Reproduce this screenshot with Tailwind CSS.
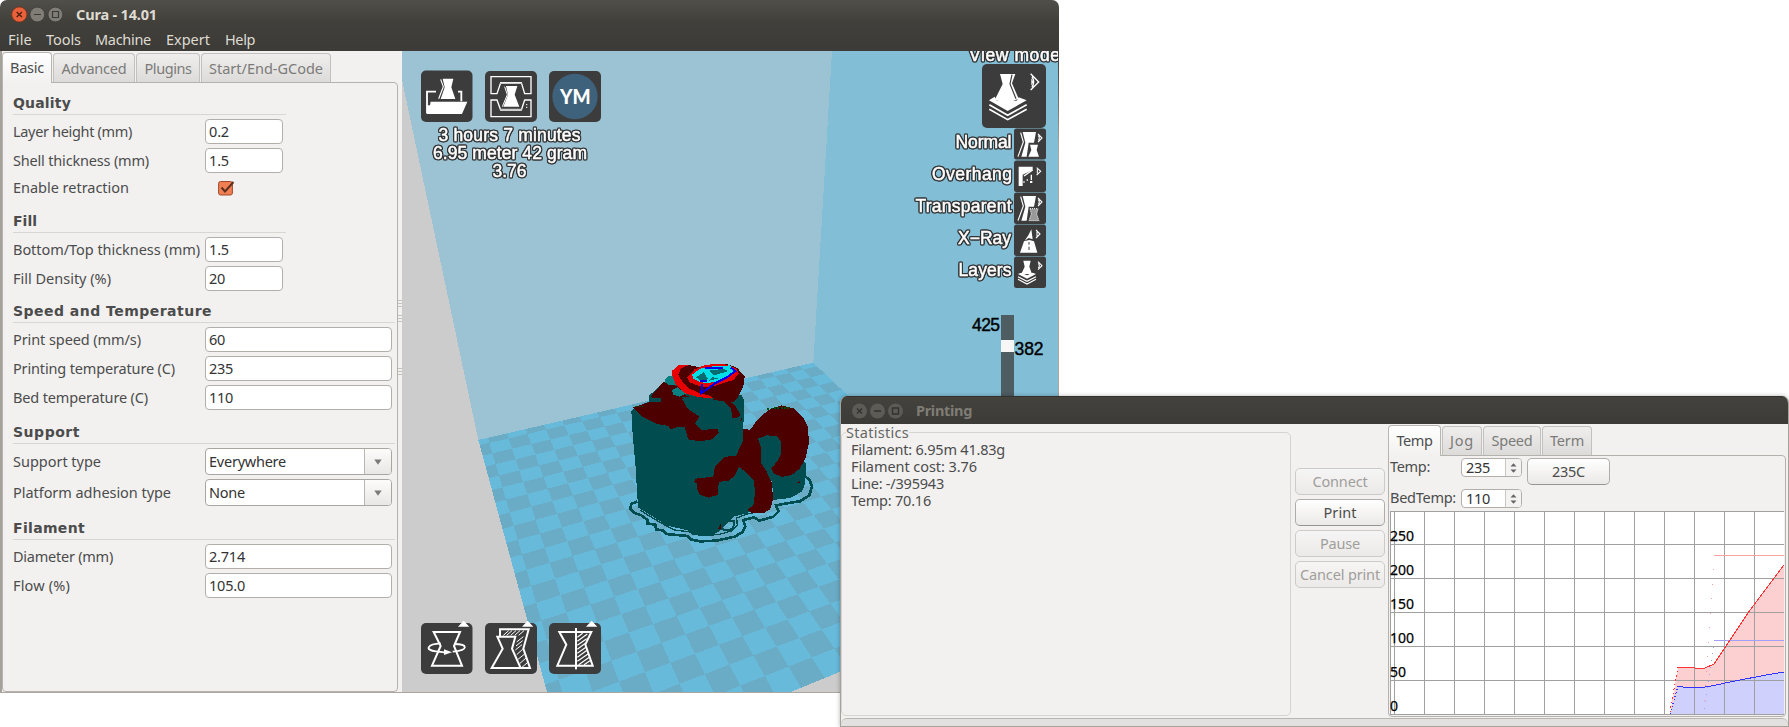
<!DOCTYPE html>
<html lang="en">
<head>
<meta charset="utf-8">
<title>Cura - 14.01</title>
<script src="https://cdn.jsdelivr.net/npm/@tailwindcss/browser@4"></script>
</head>
<body class="relative h-[727px] w-[1789px] overflow-hidden bg-white font-['Noto_Sans','Open_Sans',sans-serif] text-[14.5px] leading-[18px] text-[#4c4c4c] [&_label]:pb-[2px] [&_span]:pb-[2px]">

<!-- Main window -->
<section class="absolute left-0 top-0 flex h-[693px] w-[1059px] flex-col overflow-hidden rounded-t-[7px] border-b border-[#aba7a0] bg-[#f2f1f0]">
  <header class="h-[51px] shrink-0 bg-linear-to-b from-[#504f49] via-[#403f3a] via-45% to-[#3c3b37] text-[#dfdbd2]">
    <div class="flex h-[28px] items-center pl-[11px]">
      <svg class="block h-[20px] w-[54px]" viewBox="0 0 54 20">
        <circle cx="8.3" cy="10.5" r="7.6" fill="#e9613a" stroke="#7a3019" stroke-width=".8"/><path d="M5.7 7.9l5.2 5.2M10.9 7.9l-5.2 5.2" stroke="#50200f" stroke-width="1.4"/>
        <circle cx="26.3" cy="10.5" r="7.4" fill="#7f7d76" stroke="#3a3935" stroke-width=".8"/><path d="M23 10.5h7" stroke="#3b3a36" stroke-width="1.2"/>
        <circle cx="44.4" cy="10.5" r="7.4" fill="#7f7d76" stroke="#3a3935" stroke-width=".8"/><path d="M41.5 7.5h6v6h-6z" fill="none" stroke="#3b3a36" stroke-width="1.2"/>
      </svg>
      <h1 class="ml-[11px] whitespace-nowrap font-bold"><span data-w="81">Cura - 14.01</span></h1>
    </div>
    <nav class="flex h-[23px] items-center gap-[14px] whitespace-nowrap pl-[8px]">
      <span data-w="24">File</span><span data-w="35">Tools</span><span data-w="56">Machine</span><span class="ml-px" data-w="44">Expert</span><span class="ml-px" data-w="30">Help</span>
    </nav>
  </header>

  <div class="flex min-h-0 flex-1">
    <aside class="relative flex w-[402px] shrink-0 flex-col border-l-2 border-[#a5a29c] pr-[4px]">
      <div class="flex h-[31px] items-end gap-px whitespace-nowrap text-[#7b7b79]">
        <div class="z-10 -mb-px flex h-[31px] w-[50px] items-center justify-center rounded-t-[4px] border border-b-0 border-[#b9b6b2] bg-linear-to-b from-white to-[#f2f1f0] text-[#4c4c4c]"><span data-w="34">Basic</span></div>
        <div class="flex h-[29px] w-[82px] items-center justify-center rounded-t-[4px] border border-b-0 border-[#c3c1be] bg-linear-to-b from-[#efeeed] to-[#dddbd9] pt-[2px]"><span data-w="65">Advanced</span></div>
        <div class="flex h-[29px] w-[64px] items-center justify-center rounded-t-[4px] border border-b-0 border-[#c3c1be] bg-linear-to-b from-[#efeeed] to-[#dddbd9] pt-[2px]"><span data-w="47">Plugins</span></div>
        <div class="flex h-[29px] w-[130px] items-center justify-center rounded-t-[4px] border border-b-0 border-[#c3c1be] bg-linear-to-b from-[#efeeed] to-[#dddbd9] pt-[2px]"><span data-w="114">Start/End-GCode</span></div>
      </div>
      <div class="flex flex-1 flex-col whitespace-nowrap rounded-[4px] rounded-tl-none border border-[#b5b2ae] pl-[10px] text-[#4c4c4c]">
        <h2 class="flex h-[32px] w-[273px] items-end border-b border-[#d8d6d3] font-['DejaVu_Sans'] text-[14px] font-bold"><span data-w="58">Quality</span></h2>
        <div class="mt-1 flex h-[25px] items-center"><label class="w-[192px]"><span data-w="119">Layer height (mm)</span></label><div class="flex h-[25px] w-[78px] items-center rounded-[4px] border border-[#b2afab] bg-white pl-[3px] text-[#333]"><span data-w="20">0.2</span></div></div>
        <div class="mt-1 flex h-[25px] items-center"><label class="w-[192px]"><span data-w="136">Shell thickness (mm)</span></label><div class="flex h-[25px] w-[78px] items-center rounded-[4px] border border-[#b2afab] bg-white pl-[3px] text-[#333]"><span data-w="20">1.5</span></div></div>
        <div class="mt-[4px] flex h-[22px] items-center"><label class="w-[205px]"><span data-w="116">Enable retraction</span></label>
          <svg class="block h-[16px] w-[18px]" viewBox="0 0 18 16"><rect x=".6" y="1.5" width="13.8" height="13.5" rx="2" fill="#f07f54" stroke="#a2482a"/><path d="M3.5 7.5l3.5 4L15.5 2" fill="none" stroke="#5d2f1e" stroke-width="1.9"/></svg>
        </div>
        <h2 class="flex h-[34px] w-[273px] items-end border-b border-[#d8d6d3] font-['DejaVu_Sans'] text-[14px] font-bold"><span data-w="24">Fill</span></h2>
        <div class="mt-1 flex h-[25px] items-center"><label class="w-[192px]"><span data-w="187">Bottom/Top thickness (mm)</span></label><div class="flex h-[25px] w-[78px] items-center rounded-[4px] border border-[#b2afab] bg-white pl-[3px] text-[#333]"><span data-w="20">1.5</span></div></div>
        <div class="mt-1 flex h-[25px] items-center"><label class="w-[192px]"><span data-w="98">Fill Density (%)</span></label><div class="flex h-[25px] w-[78px] items-center rounded-[4px] border border-[#b2afab] bg-white pl-[3px] text-[#333]"><span data-w="16">20</span></div></div>
        <h2 class="flex h-[32px] w-[382px] items-end border-b border-[#d8d6d3] font-['DejaVu_Sans'] text-[14px] font-bold"><span data-w="199">Speed and Temperature</span></h2>
        <div class="mt-1 flex h-[25px] items-center"><label class="w-[192px]"><span data-w="128">Print speed (mm/s)</span></label><div class="flex h-[25px] w-[187px] items-center rounded-[4px] border border-[#b2afab] bg-white pl-[3px] text-[#333]"><span data-w="16">60</span></div></div>
        <div class="mt-1 flex h-[25px] items-center"><label class="w-[192px]"><span data-w="162">Printing temperature (C)</span></label><div class="flex h-[25px] w-[187px] items-center rounded-[4px] border border-[#b2afab] bg-white pl-[3px] text-[#333]"><span data-w="24">235</span></div></div>
        <div class="mt-1 flex h-[25px] items-center"><label class="w-[192px]"><span data-w="135">Bed temperature (C)</span></label><div class="flex h-[25px] w-[187px] items-center rounded-[4px] border border-[#b2afab] bg-white pl-[3px] text-[#333]"><span data-w="24">110</span></div></div>
        <h2 class="flex h-[34px] w-[382px] items-end border-b border-[#d8d6d3] font-['DejaVu_Sans'] text-[14px] font-bold"><span data-w="67">Support</span></h2>
        <div class="mt-1 flex h-[27px] items-center"><label class="w-[192px]"><span data-w="88">Support type</span></label>
          <div class="flex h-[27px] w-[187px] items-stretch overflow-hidden rounded-[4px] border border-[#a9a6a2] bg-white text-[#333]"><div class="flex flex-1 items-center pl-[3px]"><span data-w="77">Everywhere</span></div><div class="flex w-[27px] items-center justify-center border-l border-[#bab7b3] bg-linear-to-b from-[#fcfcfb] to-[#e9e7e5]"><svg class="block h-[6px] w-[8px]" viewBox="0 0 8 6"><path d="M.3.5h7.4L4 5.8z" fill="#7a7a78"/></svg></div></div></div>
        <div class="mt-1 flex h-[27px] items-center"><label class="w-[192px]"><span data-w="158">Platform adhesion type</span></label>
          <div class="flex h-[27px] w-[187px] items-stretch overflow-hidden rounded-[4px] border border-[#a9a6a2] bg-white text-[#333]"><div class="flex flex-1 items-center pl-[3px]"><span data-w="36">None</span></div><div class="flex w-[27px] items-center justify-center border-l border-[#bab7b3] bg-linear-to-b from-[#fcfcfb] to-[#e9e7e5]"><svg class="block h-[6px] w-[8px]" viewBox="0 0 8 6"><path d="M.3.5h7.4L4 5.8z" fill="#7a7a78"/></svg></div></div></div>
        <h2 class="flex h-[34px] w-[382px] items-end border-b border-[#d8d6d3] font-['DejaVu_Sans'] text-[14px] font-bold"><span data-w="72">Filament</span></h2>
        <div class="mt-1 flex h-[25px] items-center"><label class="w-[192px]"><span data-w="100">Diameter (mm)</span></label><div class="flex h-[25px] w-[187px] items-center rounded-[4px] border border-[#b2afab] bg-white pl-[3px] text-[#333]"><span data-w="36">2.714</span></div></div>
        <div class="mt-1 flex h-[25px] items-center"><label class="w-[192px]"><span data-w="57">Flow (%)</span></label><div class="flex h-[25px] w-[187px] items-center rounded-[4px] border border-[#b2afab] bg-white pl-[3px] text-[#333]"><span data-w="36">105.0</span></div></div>
      </div>
      <!-- splitter grip -->
      <svg class="absolute right-0 top-[248px] h-[80px] w-[4px]" viewBox="0 0 4 80"><path d="M0 1.5h4M0 4.5h4M0 7.5h4M0 16.5h4M0 19.5h4M0 22.5h4M0 69.5h4M0 72.5h4M0 75.5h4" stroke="#c4c2bf"/></svg>
    </aside>

    <!-- 3D viewport -->
    <svg class="block h-[641px] w-[656px] shrink-0" viewBox="402 51 656 641">
      <rect x="402" y="51" width="656" height="641" fill="#ccc"/>
      <g shape-rendering="crispEdges">
        <path d="M395 51L402 80L478.3 440L813.3 362.7L832 51z" fill="#9bc3d4"/>
        <path d="M832 51L813.3 362.7L1050 588H1060V51z" fill="#82bfd7"/>
        <path d="M478.3 440L813.3 362.7L1049 586L571.5 782z" fill="#68badb"/>
        <path id="tiles" fill="#6aabc5"/>
      </g>
      <g transform="translate(600 340) scale(.33333)" shape-rendering="crispEdges">
        <path d="M112 484L94 492L90 506L102 518L124 526L142 540V550L166 554L168 568L190 572L200 582L262 588L272 598L300 604L350 602L404 590L428 576L436 560L430 540L462 532L478 542L520 530L536 514L528 496L560 490L600 484L628 466L636 440L628 418L616 410" fill="none" stroke="#004c4e" stroke-width="8"/>
        <path d="M120 510L158 534L200 558L224 570L270 576L300 586L356 584L396 572L412 556L410 534L440 522L462 518" fill="none" stroke="#004c4e" stroke-width="4"/>
        <path d="M360 566L380 545L402 542L400 564L385 572z" fill="none" stroke="#004c4e" stroke-width="6"/>
        <path d="M94 212L110 200L148 184V166L200 120L300 165H424L432 180L430 270L460 290L540 280L618 372L616 430L606 455L570 474L520 480L516 420L470 480L464 505L440 520L400 530L356 576L330 586L275 584L265 572L200 556L114 502L106 370L98 285z" fill="#004c4e"/>
        <path d="M450 270L472 240L505 210L545 196L580 205L608 230L624 262L627 310L616 355L600 385L575 405L545 411L522 400L513 386L530 366L542 345L543 305L530 288L500 286L474 296L484 325L484 370L500 395L516 430L519 480L510 508L490 520L455 518L443 510L460 495L466 455L460 418L440 400L418 380L404 408L385 422L356 426L354 465L325 473L300 464L290 445L292 432L282 426L288 416L340 410L345 378L376 350L408 348L418 325L430 300V266z" fill="#4c0000"/>
        <path d="M98 203L150 186L155 166L192 124L236 140L260 168L305 177H370L402 192L422 225L410 234H396L394 208L370 184L300 172L246 176L262 205L298 230L286 250L305 270L354 266L356 280L335 298L300 304L265 298L254 262L236 260L210 269L206 258L170 252L130 232z" fill="#4c0000"/>
        <path d="M246 172L262 205L298 230L300 245L390 208L376 188L310 172z" fill="#004c4e"/>
        <path d="M148 170L160 174H182V186H148z" fill="#004c4e"/>
        <path d="M196 118L206 108L222 110L230 134L208 136L196 128zM216 150L232 142L246 152L258 160L240 170L220 164z" fill="#088082"/>
        <path d="M218 96L236 76L270 76L300 82L340 73H384L412 84L434 110L430 138L410 178L396 188L370 178L300 172L256 158L228 130z" fill="#4c0000"/>
        <path d="M217 92L236 75H266L242 86L235 104L246 124L268 146L300 160L334 168L336 176L290 170L256 160L228 134L217 108z" fill="#e80000"/>
        <path d="M262 112L284 88L310 77L340 72L384 74L410 86L416 100L400 120L372 128L350 136L320 142L290 136L268 126z" fill="#e80000"/>
        <path d="M276 104L300 86L326 80L370 78L390 76L404 90L398 102L376 114L350 124L320 130L296 124L280 116z" fill="#00dfe6"/>
        <path d="M288 112L312 96L324 118L304 122zM326 92L342 106L384 94L372 86zM336 112L328 122L362 114z" fill="#086c70"/>
        <path d="M316 84H370M392 82L406 94L380 112L345 130L325 145L300 162M306 132L304 158M300 122L320 122" fill="none" stroke="#0000ee" stroke-width="6"/>
        <path d="M106 200h22M502 208l20 -4h50" stroke="#064c00" stroke-width="5" stroke-dasharray="6 4"/>
        <path d="M354 566l8-14v14zM588 430l12-8v8zM420 244l6-14v10z" fill="#4c0000"/>
      </g>

      <!-- top tool buttons -->
      <g fill="#3c3c3c"><rect x="421" y="70.5" width="51.5" height="51.5" rx="5"/><rect x="485" y="71" width="52" height="51" rx="5"/><rect x="549" y="71" width="52" height="51" rx="5"/><rect x="421" y="623" width="51.5" height="51" rx="5"/><rect x="485" y="623" width="52" height="51" rx="5"/><rect x="549" y="623" width="52" height="51" rx="5"/></g>
      <g transform="translate(400 50) scale(.33333)">
        <path d="M108 125H81V190M174 125H184V154" fill="none" stroke="#fff" stroke-width="5.5"/>
        <path d="M92 155H202L186 192H80L82 166L90 166z" fill="#fff"/>
        <path d="M128 86H160L154 112L166 147H122L134 112z" fill="#fff"/><path d="M122 88L130 110L116 146" fill="none" stroke="#fff" stroke-width="3.5"/>
        <path d="M273 80H393V131H374L364 98H302L291 131H273zM273 200H393V150H374L364 180H302L291 150H273z" fill="none" stroke="#fff" stroke-width="4"/>
        <path d="M300 100H366M300 178H366" stroke="#ccc" stroke-width="4"/>
        <path d="M318 108H352L344 134L358 170H310L324 134z" fill="#fff"/><path d="M314 110L322 134L307 170" fill="none" stroke="#fff" stroke-width="3"/>
        <path d="M378 164h4M378 172h4" stroke="#fff" stroke-width="3"/>
        <circle cx="525" cy="139.5" r="68" fill="#3e627c"/>
        <text x="480" y="163" font-family="Lato" font-weight="900" font-size="62" textLength="92" lengthAdjust="spacingAndGlyphs" fill="#fff">YM</text>
      </g>
      <g class="[filter:drop-shadow(1px_0_0_#333)_drop-shadow(-1px_0_0_#333)_drop-shadow(0_1px_0_#333)_drop-shadow(0_-1px_0_#333)]" font-family="Liberation Sans" font-size="17.5" fill="#fff" stroke="#fff" stroke-width=".5">
        <text x="438.5" y="141" textLength="142">3 hours 7 minutes</text>
        <text x="433" y="159" textLength="154">6.95 meter 42 gram</text>
        <text x="492.5" y="177" textLength="34">3.76</text>
        <text x="969" y="61" textLength="91">View mode</text>
        <text x="955.5" y="148" textLength="56">Normal</text>
        <text x="932" y="180" textLength="80">Overhang</text>
        <text x="915.5" y="212" textLength="96">Transparent</text>
        <text x="958" y="244" textLength="53">X−Ray</text>
        <text x="958.5" y="276" textLength="53">Layers</text>
      </g>

      <!-- view mode menu -->
      <g fill="#3c3c3c"><rect x="982" y="64" width="64" height="64" rx="5"/><rect x="1014" y="128.5" width="32" height="31" rx="2.5"/><rect x="1014" y="160.5" width="32" height="31.5" rx="2.5"/><rect x="1014" y="192.5" width="32" height="31.5" rx="2.5"/><rect x="1014" y="224.5" width="32" height="31.5" rx="2.5"/><rect x="1014" y="256.5" width="32" height="31.5" rx="2.5"/></g>
      <g transform="translate(880 40) scale(.33333)" fill="#fff">
        <path d="M360 102H406L396 130L416 176L382 190L344 180L368 132z"/><path d="M396 104L390 132L408 176" fill="none" stroke="#3c3c3c" stroke-width="3.5"/>
        <path d="M327 181L344 170L350 182H410L416 172L440 181L383 213z"/>
        <path d="M328 194L383 226L440 194M328 208L383 239L440 208" fill="none" stroke="#fff" stroke-width="5"/>
        <path d="M452 101L476 126L452 150M456 110Q466 126 456 142" fill="none" stroke="#fff" stroke-width="4"/><path d="M454 115l6 11-6 11z"/>
        <path d="M428 276H468L462 308H446L440 350H424L436 308zM450 314H474L470 330L477 350H445L454 330z"/><path d="M422 278L430 306L414 350" fill="none" stroke="#fff" stroke-width="3.5"/>
        <path d="M416 380H458V390L428 404V438H416z"/><path d="M458 390L432 408M454 404V420" fill="none" stroke="#fff" stroke-width="4"/><path d="M450 423h7v6h-7zM430 424h4v4h-4zM440 418h4v4h-4z"/>
        <path d="M428 468H468L462 500H446L440 542H424L436 500z"/><path d="M422 470L430 498L414 542" fill="none" stroke="#fff" stroke-width="3.5"/>
        <path d="M450 506H474L470 522L477 542H447L454 522z" fill="#999" stroke="#fff" stroke-width="3" stroke-dasharray="3 3"/>
        <path d="M454 568L458 598L446 594L434 602L446 584zM432 604L448 600L462 604L472 638H420z"/><path d="M447 606V614M447 620V630" stroke="#3c3c3c" stroke-width="3"/>
        <path d="M430 662H452L448 680L456 702H424L434 680z"/><path d="M414 702L424 698L441 706L458 698L468 702L441 716z"/><path d="M414 710L441 724L468 710M414 718L441 732L468 718" fill="none" stroke="#fff" stroke-width="3.5"/>
        <path d="M474 282L486 294L474 306M475 287Q481 294 475 301M470 383L482 394L470 405M472 388V400M474 474L486 486L474 498M475 479Q481 486 475 493M468 570L480 582L468 594M471 575V589M474 665L486 677L474 689M475 670Q481 677 475 684" fill="none" stroke="#fff" stroke-width="3.2"/>
      </g>

      <!-- bottom tool buttons -->
      <g transform="translate(400 340) scale(.33333)" fill="none" stroke="#fff" stroke-width="6">
        <path d="M174 860L191 842L208 860zM366 860L383 842L400 860zM558 860L575 842L592 860z" fill="#fff" stroke="none"/>
        <path d="M101 876H180L162 918L186 977H96L122 918z"/>
        <path d="M122 910C82 912 72 930 108 934L134 937M162 912C204 912 208 930 158 935" stroke-width="5.5"/><path d="M132 928L156 937L132 945z" fill="#fff" stroke="none"/>
        <path d="M292 890H346L336 926L362 984H275L308 926z" /><path d="M300 890V868H386L370 926L390 984H360"/>
        <path d="M310 886l16-14M320 886l16-14M332 886l16-14M344 886l16-14M356 886l16-14M350 906l20-16M348 918l20-16M346 930l20-16M350 944l18-16M354 958l20-16M360 970l18-16M366 982l16-14" stroke-width="3"/>
        <path d="M528 876H478L499 914L472 977H578L556 914L574 876H528"/><path d="M528 864V988"/>
        <path d="M532 892l16-12M532 904l30-22M532 916l28-20M532 928l24-18M532 940l28-20M532 952l30-22M532 964l32-22M536 974l32-22M552 974l18-12" stroke-width="3.5"/>
      </g>

      <!-- layer slider -->
      <rect x="1001" y="315" width="13" height="100" fill="#4e5d62"/><rect x="1001" y="340" width="13" height="12" fill="#f6f6f6"/>
      <g font-family="Liberation Sans" font-size="17.5" fill="#000" stroke="#000" stroke-width=".4"><text x="972" y="331" textLength="28">425</text><text x="1014.5" y="355" textLength="29">382</text></g>
    </svg>
    <div class="w-px bg-linear-to-b from-[#3c3b37] via-[#aba7a0] via-15% to-[#aba7a0]"></div>
  </div>
</section>

<!-- Printing window -->
<section class="absolute left-[840px] top-[396px] flex h-[331px] w-[949px] flex-col overflow-hidden rounded-t-[7px] border-x border-b border-[#a5a29c] bg-[#f2f1f0] shadow-[0_0_4px_rgba(0,0,0,0.3)]">
  <header class="-mx-px flex h-[28px] shrink-0 items-center border-t border-[#33322e] bg-linear-to-b from-[#43423d] to-[#3c3b37] pl-[12px] text-[#7f7c75]">
    <svg class="block h-[20px] w-[54px]" viewBox="0 0 54 20">
      <g fill="#5d5b55"><circle cx="7.5" cy="10" r="7.5"/><circle cx="25.5" cy="10" r="7.5"/><circle cx="43.5" cy="10" r="7.5"/></g>
      <path d="M5 7.5l5 5M10 7.5l-5 5M22 10h7M40.5 7h6v6h-6z" fill="none" stroke="#33322e" stroke-width="1.4"/>
    </svg>
    <h2 class="ml-[10px] whitespace-nowrap pb-px font-bold"><span data-w="56">Printing</span></h2>
  </header>
  <div class="flex min-h-0 flex-1 whitespace-nowrap">
    <fieldset class="h-[292px] w-[450px] shrink-0 rounded-[5px] border border-[#d6d4d1] pl-[9px] text-[#4c4c4c]">
      <legend class="-ml-[5px] leading-[17px] text-[#666]"><span data-w="63">Statistics</span></legend>
      <div class="flex flex-col leading-[17px]">
        <div><span data-w="154">Filament: 6.95m 41.83g</span></div>
        <div><span data-w="126">Filament cost: 3.76</span></div>
        <div><span data-w="93">Line: -/395943</span></div>
        <div><span data-w="80">Temp: 70.16</span></div>
      </div>
    </fieldset>
    <div class="ml-[4px] mt-[44px] flex w-[90px] flex-col gap-1">
      <div class="flex h-[27px] items-center justify-center rounded-[5px] border border-[#cdcbc8] bg-linear-to-b from-[#f6f5f5] to-[#eceae8] text-[#a09e9b]"><span data-w="55">Connect</span></div>
      <div class="flex h-[27px] items-center justify-center rounded-[5px] border border-[#b0ada9] border-b-[#989590] bg-linear-to-b from-white to-[#ebe9e7] text-[#4c4c4c]"><span data-w="33">Print</span></div>
      <div class="flex h-[27px] items-center justify-center rounded-[5px] border border-[#cdcbc8] bg-linear-to-b from-[#f6f5f5] to-[#eceae8] text-[#a09e9b]"><span data-w="40">Pause</span></div>
      <div class="flex h-[27px] items-center justify-center rounded-[5px] border border-[#cdcbc8] bg-linear-to-b from-[#f6f5f5] to-[#eceae8] text-[#a09e9b]"><span data-w="80">Cancel print</span></div>
    </div>
    <div class="ml-[3px] flex h-[293px] w-[398px] flex-col">
      <div class="flex h-[31px] items-end gap-px text-[#7b7b79]">
        <div class="z-10 -mb-px flex h-[31px] w-[53px] items-center justify-center rounded-t-[4px] border border-b-0 border-[#b9b6b2] bg-linear-to-b from-white to-[#f2f1f0] text-[#4c4c4c]"><span data-w="36">Temp</span></div>
        <div class="flex h-[29px] w-[40px] items-center justify-center rounded-t-[4px] border border-b-0 border-[#c3c1be] bg-linear-to-b from-[#efeeed] to-[#dddbd9]"><span data-w="24">Jog</span></div>
        <div class="flex h-[29px] w-[58px] items-center justify-center rounded-t-[4px] border border-b-0 border-[#c3c1be] bg-linear-to-b from-[#efeeed] to-[#dddbd9]"><span data-w="41">Speed</span></div>
        <div class="flex h-[29px] w-[50px] items-center justify-center rounded-t-[4px] border border-b-0 border-[#c3c1be] bg-linear-to-b from-[#efeeed] to-[#dddbd9]"><span data-w="34">Term</span></div>
      </div>
      <div class="flex flex-1 flex-col rounded-[4px] rounded-tl-none border border-[#b5b2ae] pl-px pt-[2px]">
        <div class="flex h-[31px] items-start">
          <label class="-mt-px w-[71px]"><span data-w="40">Temp:</span></label>
          <div class="flex h-[19px] w-[61px] items-stretch overflow-hidden rounded-[4px] border border-[#b2afab] bg-white text-[#333]"><div class="flex flex-1 items-center pl-[4px]"><span data-w="24">235</span></div><div class="flex w-[16px] items-center justify-center border-l border-[#c9c7c4] bg-[#f4f3f2]"><svg class="block h-[10px] w-[7px]" viewBox="0 0 7 10"><path d="M.5 3.5L3.5.3 6.5 3.5zM.5 6.5L3.5 9.7 6.5 6.5z" fill="#666"/></svg></div></div>
          <div class="ml-[5px] flex h-[27px] w-[83px] items-center justify-center rounded-[5px] border border-[#b0ada9] border-b-[#989590] bg-linear-to-b from-white to-[#ebe9e7] text-[#4c4c4c]"><span data-w="33">235C</span></div>
        </div>
        <div class="flex h-[22px] items-start">
          <label class="-mt-px w-[71px]"><span data-w="66">BedTemp:</span></label>
          <div class="flex h-[19px] w-[61px] items-stretch overflow-hidden rounded-[4px] border border-[#b2afab] bg-white text-[#333]"><div class="flex flex-1 items-center pl-[4px]"><span data-w="24">110</span></div><div class="flex w-[16px] items-center justify-center border-l border-[#c9c7c4] bg-[#f4f3f2]"><svg class="block h-[10px] w-[7px]" viewBox="0 0 7 10"><path d="M.5 3.5L3.5.3 6.5 3.5zM.5 6.5L3.5 9.7 6.5 6.5z" fill="#666"/></svg></div></div>
        </div>
        <svg class="block h-[204px] w-[394px]" viewBox="0 0 394 204">
          <rect width="394" height="204" fill="#fff"/>
          <g shape-rendering="crispEdges">
            <path d="M280 203L288 156L305 157L313 158L324 153L358 102L394 54V203z" fill="#fcd0d0"/>
            <path d="M280 203L288 175L293 176H315L324 174.500L394 161V203z" fill="#d0d0fc"/>
            <path d="M0 .5H394M0 33.500H394M0 67.500H394M0 101.500H394M0 135.500H394M0 169.500H394M0 203.500H394M.5 0V204M4.500 0V204M34.500 0V204M64.500 0V204M94.500 0V204M124.500 0V204M154.500 0V204M184.500 0V204M214.500 0V204M244.500 0V204M274.500 0V204M304.500 0V204M334.500 0V204M364.500 0V204" stroke="#a0a0a0" fill="none"/>
            <path d="M324 44.500H394" stroke="#f9a0a0"/><path d="M324 129.500H394" stroke="#a0a0fa"/>
            <path d="M323 58h1v1h-1zM322 73h1v1h-1zM321 87h1v1h-1zM320 102h1v1h-1zM319 116h1v1h-1zM318 131h1v1h-1zM317 145h1v1h-1zM316 160h1v1h-1zM315 174h1v1h-1zM314 189h1v1h-1z" fill="#f9a0a0"/>
            <path d="M323 136h1v1h-1zM322 142h1v1h-1zM321 149h1v1h-1zM320 156h1v1h-1zM319 163h1v1h-1zM318 170h1v1h-1zM317 176h1v1h-1zM316 183h1v1h-1zM315 190h1v1h-1zM314 197h1v1h-1z" fill="#a0a0fa"/>
            <path d="M280 201L288 156" fill="none" stroke="#f33" stroke-dasharray="1.500 3"/><path d="M288 156H298L305 157L313 158L324 153L358 102L394 54" fill="none" stroke="#f33"/>
            <path d="M280 203L288 175" fill="none" stroke="#33f" stroke-dasharray="1.500 2"/><path d="M288 175L293 176H315L324 174.500L340 171L376 164L394 161" fill="none" stroke="#33f"/>
          </g>
          <g fill="#000" stroke="#000" stroke-width=".25" font-family="Noto Sans" font-size="14"><text x="0" y="30" textLength="24">250</text><text x="0" y="64" textLength="24">200</text><text x="0" y="98" textLength="24">150</text><text x="0" y="132" textLength="24">100</text><text x="0" y="166" textLength="16">50</text><text x="0" y="200">0</text></g>
        </svg>
      </div>
    </div>
  </div>
  <footer class="h-[8px] shrink-0 rounded-t-[6px] border-t border-[#b9b6b2] bg-[#e3e1df]"></footer>
</section>

<script>
  // Checkered build plate: project a 20.5 x 20.5 tile grid onto the plate's four corners.
  (function () {
    const N = 20.5, q = [[478.3, 440], [813.3, 362.7], [1049, 586], [571.5, 782]];
    const [[x0, y0], [x1, y1], [x2, y2], [x3, y3]] = q;
    const dx1 = x1 - x2, dx2 = x3 - x2, dx3 = x0 - x1 + x2 - x3;
    const dy1 = y1 - y2, dy2 = y3 - y2, dy3 = y0 - y1 + y2 - y3;
    const den = dx1 * dy2 - dx2 * dy1;
    const g = (dx3 * dy2 - dx2 * dy3) / den, h = (dx1 * dy3 - dx3 * dy1) / den;
    const a = x1 - x0 + g * x1, b = x3 - x0 + h * x3, d = y1 - y0 + g * y1, e = y3 - y0 + h * y3;
    const p = (u, v) => {
      u /= N; v /= N;
      const w = g * u + h * v + 1;
      return ((a * u + b * v + x0) / w).toFixed(1) + ' ' + ((d * u + e * v + y0) / w).toFixed(1);
    };
    const line = i => Math.min(N, Math.max(0, i - 0.5));
    let out = '';
    for (let i = 0; i < 21; i++) for (let j = 0; j < 21; j++) if ((i + j) % 2) {
      out += 'M' + p(line(i), line(j)) + 'L' + p(line(i + 1), line(j)) + 'L' + p(line(i + 1), line(j + 1)) + 'L' + p(line(i), line(j + 1)) + 'z';
    }
    document.getElementById('tiles').setAttribute('d', out);
  })();

  // Spread each label over its nominal width, once styles and fonts are in place.
  const labels = document.querySelectorAll('[data-w]');
  function fit() {
    labels.forEach(el => {
      el.style.letterSpacing = '0px';
      const w = el.getBoundingClientRect().width;
      el.style.letterSpacing = ((el.dataset.w - w) / el.textContent.length).toFixed(3) + 'px';
    });
  }
  addEventListener('load', fit);
  document.fonts.ready.then(fit);
  new ResizeObserver(fit).observe(document.body);
</script>
</body>
</html>
